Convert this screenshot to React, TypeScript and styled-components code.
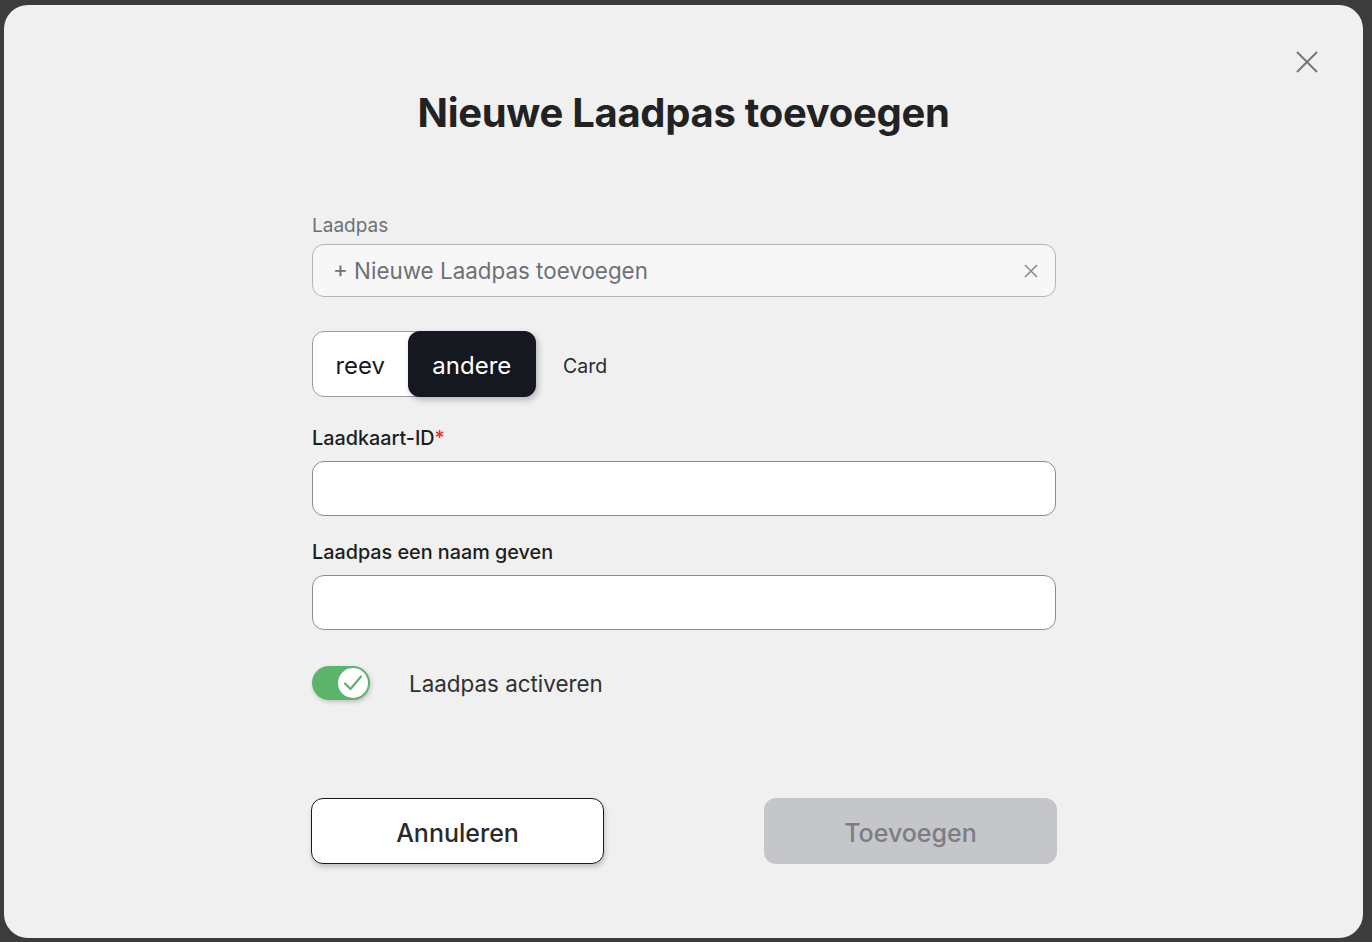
import styled, { createGlobalStyle } from "styled-components";

const GlobalStyle = createGlobalStyle`
  html, body {
    margin: 0;
    padding: 0;
    background: #3c3c3c;
    font-family: "Inter", "Noto Sans", sans-serif;
  }
  * { box-sizing: border-box; }
`;

const Backdrop = styled.div`
  width: 1372px;
  height: 942px;
  padding: 5px 9px 4px 4px;
  background: #3c3c3c;
`;

const Modal = styled.div`
  position: relative;
  height: 100%;
  background: #f0f0f0;
  border-radius: 24px;
  display: flex;
  flex-direction: column;
  align-items: center;
  padding-top: 84px;
`;

const CloseBtn = styled.button`
  position: absolute;
  top: 39px;
  right: 38px;
  width: 36px;
  height: 36px;
  border: none;
  background: transparent;
  padding: 0;
  display: flex;
  align-items: center;
  justify-content: center;
  cursor: pointer;
`;

const Title = styled.h1`
  margin: 0;
  font-size: 40px;
  font-weight: 700;
  letter-spacing: -0.3px;
  color: #222;
  line-height: 48px;
`;

const Form = styled.form`
  width: 744px;
  margin-top: 77px;
  margin-left: 1px;
  display: flex;
  flex-direction: column;
`;

const Label = styled.label<{ $muted?: boolean }>`
  font-size: ${(p) => (p.$muted ? "19px" : "19.8px")};
  line-height: 24px;
  font-weight: ${(p) => (p.$muted ? 400 : 500)};
  color: ${(p) => (p.$muted ? "#6e7076" : "#1c1d20")};
  margin-bottom: ${(p) => (p.$muted ? "6px" : "11px")};
  span {
    color: #e5322d;
  }
`;

const SelectBox = styled.div`
  height: 53px;
  border: 1px solid #b3b4b8;
  border-radius: 12px;
  background: #f7f7f7;
  display: flex;
  align-items: center;
  justify-content: space-between;
  padding: 0 16px 0 20px;
  font-size: 22.4px;
  color: #6e7076;
`;

const SegmentRow = styled.div`
  display: flex;
  align-items: center;
  gap: 27px;
  margin-top: 34px;
`;

const Segmented = styled.div`
  display: flex;
  height: 66px;
  width: 224px;
  border: 1px solid #9a9ca0;
  border-radius: 12px;
  background: #fff;
`;

const Segment = styled.div<{ $active?: boolean }>`
  display: flex;
  align-items: center;
  justify-content: center;
  font-size: 24px;
  height: 66px;
  margin-top: -1px;
  padding-top: 3px;
  border-radius: 12px;
  color: ${(p) => (p.$active ? "#fff" : "#1a1a1a")};
  background: ${(p) => (p.$active ? "#15181e" : "transparent")};
  box-shadow: ${(p) => (p.$active ? "2px 3px 6px rgba(0,0,0,0.25)" : "none")};
  width: ${(p) => (p.$active ? "129px" : "95px")};
  margin-right: ${(p) => (p.$active ? "-1px" : "0")};
`;

const SmallText = styled.span`
  font-size: 19.5px;
  color: #2a2b2e;
  padding-top: 3px;
`;

const Field = styled.div`
  display: flex;
  flex-direction: column;
  margin-top: 29px;
  & + & {
    margin-top: 24px;
  }
`;

const TextInput = styled.input`
  height: 55px;
  border: 1px solid #8a8c90;
  border-radius: 12px;
  background: #fff;
  padding: 0 16px;
  font-size: 20px;
  font-family: inherit;
  outline: none;
`;

const ToggleRow = styled.div`
  display: flex;
  align-items: center;
  gap: 39px;
  margin-top: 36px;
`;

const Switch = styled.div`
  width: 58px;
  height: 34px;
  border-radius: 17px;
  background: #5cb46c;
  display: flex;
  align-items: center;
  justify-content: flex-end;
  padding: 2px;
  box-shadow: 1px 2px 4px rgba(0, 0, 0, 0.2);
`;

const Knob = styled.div`
  width: 30px;
  height: 30px;
  border-radius: 50%;
  background: #fff;
  display: flex;
  align-items: center;
  justify-content: center;
`;

const ToggleLabel = styled.span`
  font-size: 22.4px;
  color: #2f3033;
`;

const Actions = styled.div`
  display: flex;
  justify-content: space-between;
  margin-top: 98px;
  margin-left: -1px;
  margin-right: -1px;
`;

const Button = styled.button<{ $primary?: boolean }>`
  width: 293px;
  height: 66px;
  padding: 4px 0 0;
  border-radius: 12px;
  font-family: inherit;
  font-size: 25px;
  font-weight: 500;
  cursor: pointer;
  border: ${(p) => (p.$primary ? "none" : "1.5px solid #1a1a1a")};
  background: ${(p) => (p.$primary ? "#c4c6ca" : "#fff")};
  color: ${(p) => (p.$primary ? "#7c7e82" : "#2a2a2a")};
  box-shadow: ${(p) => (p.$primary ? "none" : "1px 3px 5px rgba(0,0,0,0.2)")};
`;

const App = () => {
  return (
    <>
      <GlobalStyle />
      <Backdrop>
        <Modal>
          <CloseBtn type="button" aria-label="Sluiten">
            <svg width="24" height="24" viewBox="0 0 24 24" fill="none" stroke="#777" strokeWidth="2">
              <path d="M2 2L22 22M22 2L2 22" />
            </svg>
          </CloseBtn>
          <Title>Nieuwe Laadpas toevoegen</Title>
          <Form>
            <Label $muted>Laadpas</Label>
            <SelectBox>
              + Nieuwe Laadpas toevoegen
              <svg width="16" height="16" viewBox="0 0 16 16" fill="none" stroke="#8a8b8f" strokeWidth="1.6">
                <path d="M2 2L14 14M14 2L2 14" />
              </svg>
            </SelectBox>
            <SegmentRow>
              <Segmented>
                <Segment>reev</Segment>
                <Segment $active>andere</Segment>
              </Segmented>
              <SmallText>Card</SmallText>
            </SegmentRow>
            <Field>
              <Label>
                Laadkaart-ID<span>*</span>
              </Label>
              <TextInput />
            </Field>
            <Field>
              <Label>Laadpas een naam geven</Label>
              <TextInput />
            </Field>
            <ToggleRow>
              <Switch>
                <Knob>
                  <svg width="24" height="24" viewBox="0 0 24 24" fill="none" stroke="#5cb46c" strokeWidth="2.2" strokeLinecap="round" strokeLinejoin="round">
                    <path d="M4 12.5L9.5 18L20 5.5" />
                  </svg>
                </Knob>
              </Switch>
              <ToggleLabel>Laadpas activeren</ToggleLabel>
            </ToggleRow>
            <Actions>
              <Button type="button">Annuleren</Button>
              <Button type="button" $primary>
                Toevoegen
              </Button>
            </Actions>
          </Form>
        </Modal>
      </Backdrop>
    </>
  );
};

export default App;
